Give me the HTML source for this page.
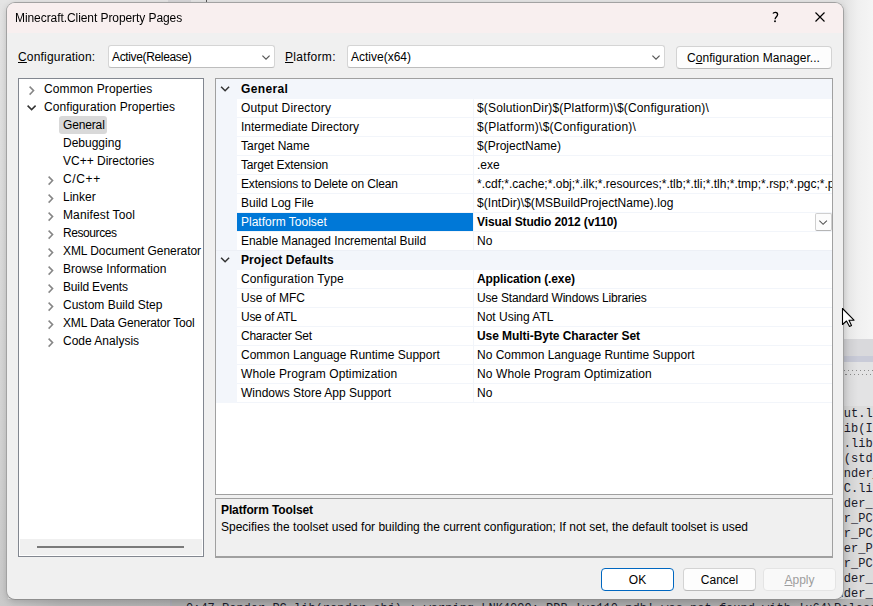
<!DOCTYPE html>
<html><head><meta charset="utf-8">
<style>
*{margin:0;padding:0;box-sizing:border-box}
html,body{width:873px;height:606px;overflow:hidden}
body{position:relative;background:#e6e6e6;font-family:"Liberation Sans",sans-serif;font-size:12px;color:#000}
.a{position:absolute}
.t{position:absolute;white-space:nowrap;line-height:18px;height:18px}
.b{font-weight:bold;letter-spacing:-0.12px}
.u{text-decoration:underline;text-underline-offset:1px;text-decoration-thickness:1px}
#bgl{left:0;top:0;width:8px;height:606px;background:linear-gradient(to bottom,#e3e3e3 0,#dadada 250px,#d2d2d2 450px,#c9c9c9 606px)}
#bgtop{left:0;top:0;width:842px;height:3px;background:#e4e4e4}
#bgr{left:836px;top:0;width:37px;height:340px;background:linear-gradient(to right,#e2e2e2 8px,#f0f0f0 22px,#f5f5f5)}
#code{left:780px;top:339px;width:93px;height:267px;background:#d7d7d9;overflow:hidden}
#bgbot{left:0;top:599px;width:873px;height:7px;background:linear-gradient(to right,#cacaca,#b6b6b6 60px,#b0b0b0 170px,#aaaaab 172px,#aaaaab 780px,#b8b8b8 873px);overflow:hidden}
#dlg{left:6px;top:2px;width:838px;height:598px;border:1px solid #a2a2a2;border-bottom-color:#8e8e8e;box-shadow:0 2px 6px rgba(0,0,0,0.16);border-radius:9px;background:#f0f0f0;overflow:hidden}
#title{left:0;top:0;width:836px;height:30px;background:#f8efef}
.combo{position:absolute;background:#fff;border:1px solid #d5d5d5;border-bottom-color:#bdbdbd;border-radius:3px;height:23px}
.btn{position:absolute;background:#fdfdfd;border:1px solid #d3d3d3;border-bottom-color:#b9b9b9;border-radius:4px}
.btn .t{width:100%;text-align:center}
#tree{left:11px;top:75px;width:186px;height:479px;border:1px solid #828790;background:#fff;overflow:hidden}
.tsel{width:48px;height:18px;background:#d9d9d9;border-radius:3px}
#hsb{left:1px;top:460px;width:182px;height:16px;background:#f0f0f0}
#hth{left:17px;top:7px;width:147px;height:2px;background:#7a7a7a}
#grid{left:208px;top:75px;width:618px;height:417px;border:1px solid #a0a0a0;background:#fff;overflow:hidden}
#desc{left:208px;top:495px;width:618px;height:60px;border:1px solid #a0a0a0;border-bottom-width:2px;background:#f0f0f0}
.row{position:absolute;left:0;width:616px;height:19px}
.cat{background:#f3f6fb}
.gut{position:absolute;left:0;top:0;width:21px;height:19px;background:#f3f6fb}
.nm{position:absolute;left:21px;top:0;width:236px;height:18px;padding-left:4px;line-height:18px;white-space:nowrap;overflow:hidden}
.nm.sel{background:#0078d7;color:#fff}
.vl{position:absolute;left:258px;top:0;width:358px;height:18px;padding-left:3px;line-height:18px;white-space:nowrap;overflow:hidden}
.sep{position:absolute;left:21px;top:18px;width:595px;height:1px;background:#f2f5fa}
.vsep{position:absolute;left:257px;top:0;width:1px;height:19px;background:#f2f5fa}
.dd{position:absolute;left:599px;top:0;width:17px;height:18px;background:#fcfcfc;border:1px solid #cfcfcf;border-bottom-color:#b5b5b5;border-radius:2px}
#codetxt{left:56.6px;top:68px;font-family:"Liberation Mono",monospace;font-size:12px;line-height:15px;color:#1a1a2a}
#bottxt{left:186px;top:3px;font-family:"Liberation Mono",monospace;font-size:12px;line-height:15px;color:#1a1a2a}

</style></head><body>
<div class="a" id="bgl"></div>
<div class="a" id="bgtop"></div>
<div class="a" style="left:168px;top:0;width:23px;height:3px;background:#d6d6d8"></div>
<div class="a" style="left:206px;top:0;width:1px;height:3px;background:#555"></div>
<div class="a" id="bgr"></div>
<div class="a" id="code">
<div class="a" style="left:0;top:0;width:93px;height:17px;background:#d9d9dc"></div>
<div class="a" style="left:0;top:17px;width:93px;height:6px;background:#c9cbd8"></div>
<div class="a" style="left:0;top:23px;width:93px;height:44px;background:#e3e3e4"></div>
<div class="a" style="left:64px;top:31px;width:29px;height:1px;background:repeating-linear-gradient(to right,#8a8a8a 0,#8a8a8a 1px,transparent 1px,transparent 4px);background-position:0 0"></div>
<div class="a" style="left:64px;top:35px;width:29px;height:1px;background:repeating-linear-gradient(to right,#8a8a8a 0,#8a8a8a 1px,transparent 1px,transparent 4px);background-position:2px 0"></div>
<div class="a" style="left:0;top:67px;width:93px;height:200px;background:#dcdcdc"></div>
<pre class="a" id="codetxt">put.l
lib(I
t.lib
 (std
ender_
PC.li
nder_
er_PC
er_PC
der_P
er_PC
nder_
nder_</pre>
<div class="a" style="left:64px;top:0;width:14px;height:267px;background:linear-gradient(to right,rgba(0,0,0,0.08),rgba(0,0,0,0))"></div>
</div>
<div class="a" id="bgbot">
<div class="a" style="left:170px;top:0;width:2px;height:10px;background:#a9a9b2"></div>
<pre class="a" id="bottxt">0:47 Render_PC.lib(render.obj) : warning LNK4099: PDB 'vc110.pdb' was not found with 'x64\Release\Render_PC.lib'</pre>
</div>
<svg class="a" style="left:840px;top:306px;z-index:10" width="18" height="24" viewBox="0 0 18 24"><path d="M2.5 2.5L2.5 18.5L6.5 15L9.5 20.5L11.5 19.5L9 14.2L14 14.2Z" fill="#fff" stroke="#000" stroke-width="1.1" stroke-linejoin="round"/></svg>
<div class="a" id="dlg">
<div class="a" id="title"></div>
<div class="t" style="left:8px;top:6px;letter-spacing:-0.073px;will-change:transform">Minecraft.Client Property Pages</div>
<svg class="a" style="left:761px;top:6px" width="16" height="16" viewBox="0 0 16 16"><path d="M5 4.6C5.6 3.2 9.6 2.6 9.6 5.6C9.6 7.6 7.2 8 7.1 10.3" fill="none" stroke="#000" stroke-width="1.35"/><circle cx="7" cy="12.3" r="0.95" fill="#000"/></svg>
<svg class="a" style="left:807px;top:8px" width="12" height="12" viewBox="0 0 12 12"><path d="M1.5 1.5L10.5 10.5M10.5 1.5L1.5 10.5" stroke="#000" stroke-width="1.15"/></svg>
<div class="t" style="left:11px;top:45px;letter-spacing:0.19px"><span class="u">C</span>onfiguration:</div>
<div class="combo" style="left:101px;top:42px;width:167px"><div class="t" style="left:3px;top:2px;letter-spacing:-0.35px">Active(Release)</div>
<svg class="a" style="left:153px;top:9px" width="10" height="6" viewBox="0 0 10 6"><path d="M0.4 0.6L4 4.1L7.6 0.6" fill="none" stroke="#555" stroke-width="1.2"/></svg></div>
<div class="t" style="left:278px;top:45px;letter-spacing:0.31px"><span class="u">P</span>latform:</div>
<div class="combo" style="left:340px;top:42px;width:318px"><div class="t" style="left:3px;top:2px">Active(x64)</div>
<svg class="a" style="left:304px;top:9px" width="10" height="6" viewBox="0 0 10 6"><path d="M0.4 0.6L4 4.1L7.6 0.6" fill="none" stroke="#555" stroke-width="1.2"/></svg></div>
<div class="btn" style="left:669px;top:43px;width:156px;height:23px"><div class="t" style="left:10px;top:2px;width:auto;letter-spacing:0.065px">C<span class="u">o</span>nfiguration Manager...</div></div>
<div class="a" id="tree">
<svg class="a" style="left:10px;top:7px" width="7" height="10" viewBox="0 0 7 10"><path d="M0.6 0.6L4.6 4.6L0.6 8.6" fill="none" stroke="#868686" stroke-width="1.5"/></svg>
<div class="t" style="left:25px;top:1px;letter-spacing:0.100px;">Common Properties</div>
<svg class="a" style="left:8px;top:26px" width="10" height="7" viewBox="0 0 10 7"><path d="M0.6 0.6L4.6 4.6L8.6 0.6" fill="none" stroke="#333" stroke-width="1.5"/></svg>
<div class="t" style="left:25px;top:19px;letter-spacing:0.070px;">Configuration Properties</div>
<div class="a tsel" style="left:40px;top:37px"></div>
<div class="t" style="left:44px;top:37px;letter-spacing:-0.150px;">General</div>
<div class="t" style="left:44px;top:55px;">Debugging</div>
<div class="t" style="left:44px;top:73px;">VC++ Directories</div>
<svg class="a" style="left:29px;top:97px" width="7" height="10" viewBox="0 0 7 10"><path d="M0.6 0.6L4.6 4.6L0.6 8.6" fill="none" stroke="#868686" stroke-width="1.5"/></svg>
<div class="t" style="left:44px;top:91px;letter-spacing:0.625px;">C/C++</div>
<svg class="a" style="left:29px;top:115px" width="7" height="10" viewBox="0 0 7 10"><path d="M0.6 0.6L4.6 4.6L0.6 8.6" fill="none" stroke="#868686" stroke-width="1.5"/></svg>
<div class="t" style="left:44px;top:109px;">Linker</div>
<svg class="a" style="left:29px;top:133px" width="7" height="10" viewBox="0 0 7 10"><path d="M0.6 0.6L4.6 4.6L0.6 8.6" fill="none" stroke="#868686" stroke-width="1.5"/></svg>
<div class="t" style="left:44px;top:127px;letter-spacing:0.125px;">Manifest Tool</div>
<svg class="a" style="left:29px;top:151px" width="7" height="10" viewBox="0 0 7 10"><path d="M0.6 0.6L4.6 4.6L0.6 8.6" fill="none" stroke="#868686" stroke-width="1.5"/></svg>
<div class="t" style="left:44px;top:145px;letter-spacing:-0.425px;">Resources</div>
<svg class="a" style="left:29px;top:169px" width="7" height="10" viewBox="0 0 7 10"><path d="M0.6 0.6L4.6 4.6L0.6 8.6" fill="none" stroke="#868686" stroke-width="1.5"/></svg>
<div class="t" style="left:44px;top:163px;letter-spacing:-0.076px;">XML Document Generator</div>
<svg class="a" style="left:29px;top:187px" width="7" height="10" viewBox="0 0 7 10"><path d="M0.6 0.6L4.6 4.6L0.6 8.6" fill="none" stroke="#868686" stroke-width="1.5"/></svg>
<div class="t" style="left:44px;top:181px;">Browse Information</div>
<svg class="a" style="left:29px;top:205px" width="7" height="10" viewBox="0 0 7 10"><path d="M0.6 0.6L4.6 4.6L0.6 8.6" fill="none" stroke="#868686" stroke-width="1.5"/></svg>
<div class="t" style="left:44px;top:199px;letter-spacing:-0.155px;">Build Events</div>
<svg class="a" style="left:29px;top:223px" width="7" height="10" viewBox="0 0 7 10"><path d="M0.6 0.6L4.6 4.6L0.6 8.6" fill="none" stroke="#868686" stroke-width="1.5"/></svg>
<div class="t" style="left:44px;top:217px;">Custom Build Step</div>
<svg class="a" style="left:29px;top:241px" width="7" height="10" viewBox="0 0 7 10"><path d="M0.6 0.6L4.6 4.6L0.6 8.6" fill="none" stroke="#868686" stroke-width="1.5"/></svg>
<div class="t" style="left:44px;top:235px;letter-spacing:-0.168px;">XML Data Generator Tool</div>
<svg class="a" style="left:29px;top:259px" width="7" height="10" viewBox="0 0 7 10"><path d="M0.6 0.6L4.6 4.6L0.6 8.6" fill="none" stroke="#868686" stroke-width="1.5"/></svg>
<div class="t" style="left:44px;top:253px;">Code Analysis</div>
<div class="a" id="hsb"><div class="a" id="hth"></div></div>
</div>
<div class="a" id="grid"><div class="a" style="left:0;top:0;width:616px;height:1px;background:#f3f6fb"></div>
<div class="row cat" style="top:1px"><svg class="a" style="left:4px;top:6px" width="11" height="7" viewBox="0 0 11 7"><path d="M1.1 0.8L5.1 4.8L9.1 0.8" fill="none" stroke="#333" stroke-width="1.5"/></svg><div class="t b" style="left:25px;top:0;letter-spacing:0.347px;">General</div></div>
<div class="row" style="top:20px"><div class="gut"></div><div class="nm" style="letter-spacing:0.173px;">Output Directory</div><div class="vsep"></div><div class="vl" style="letter-spacing:0.152px;">$(SolutionDir)$(Platform)\$(Configuration)\</div><div class="sep"></div></div>
<div class="row" style="top:39px"><div class="gut"></div><div class="nm" style="">Intermediate Directory</div><div class="vsep"></div><div class="vl" style="letter-spacing:0.246px;">$(Platform)\$(Configuration)\</div><div class="sep"></div></div>
<div class="row" style="top:58px"><div class="gut"></div><div class="nm" style="">Target Name</div><div class="vsep"></div><div class="vl" style="">$(ProjectName)</div><div class="sep"></div></div>
<div class="row" style="top:77px"><div class="gut"></div><div class="nm" style="letter-spacing:-0.153px;">Target Extension</div><div class="vsep"></div><div class="vl" style="">.exe</div><div class="sep"></div></div>
<div class="row" style="top:96px"><div class="gut"></div><div class="nm" style="letter-spacing:-0.164px;">Extensions to Delete on Clean</div><div class="vsep"></div><div class="vl" style="">*.cdf;*.cache;*.obj;*.ilk;*.resources;*.tlb;*.tli;*.tlh;*.tmp;*.rsp;*.pgc;*.pgd;*.meta;*.tlog;*.manifest;*.res;*.pch;*.exp;*.idb;*.rep;*.xdc;*.pdb;*_manifest.rc;*.bsc;*.sbr;*.xml;*.metagen;*.bi</div><div class="sep"></div></div>
<div class="row" style="top:115px"><div class="gut"></div><div class="nm" style="">Build Log File</div><div class="vsep"></div><div class="vl" style="letter-spacing:0.047px;">$(IntDir)\$(MSBuildProjectName).log</div><div class="sep"></div></div>
<div class="row" style="top:134px"><div class="gut"></div><div class="nm sel" style="">Platform Toolset</div><div class="vsep"></div><div class="vl b" style="">Visual Studio 2012 (v110)</div><div class="sep"></div><div class="dd"><svg class="a" style="left:3px;top:6px" width="10" height="6" viewBox="0 0 10 6"><path d="M0.3 0.6L4.1 4.3L7.9 0.6" fill="none" stroke="#555" stroke-width="1.15"/></svg></div></div>
<div class="row" style="top:153px"><div class="gut"></div><div class="nm" style="letter-spacing:-0.055px;">Enable Managed Incremental Build</div><div class="vsep"></div><div class="vl" style="">No</div><div class="sep" style="left:0;width:616px;background:#edf0f6"></div></div>
<div class="row cat" style="top:172px"><svg class="a" style="left:4px;top:6px" width="11" height="7" viewBox="0 0 11 7"><path d="M1.1 0.8L5.1 4.8L9.1 0.8" fill="none" stroke="#333" stroke-width="1.5"/></svg><div class="t b" style="left:25px;top:0;letter-spacing:0.087px;">Project Defaults</div></div>
<div class="row" style="top:191px"><div class="gut"></div><div class="nm" style="letter-spacing:0.124px;">Configuration Type</div><div class="vsep"></div><div class="vl b" style="">Application (.exe)</div><div class="sep"></div></div>
<div class="row" style="top:210px"><div class="gut"></div><div class="nm" style="">Use of MFC</div><div class="vsep"></div><div class="vl" style="letter-spacing:-0.172px;">Use Standard Windows Libraries</div><div class="sep"></div></div>
<div class="row" style="top:229px"><div class="gut"></div><div class="nm" style="letter-spacing:-0.278px;">Use of ATL</div><div class="vsep"></div><div class="vl" style="">Not Using ATL</div><div class="sep"></div></div>
<div class="row" style="top:248px"><div class="gut"></div><div class="nm" style="letter-spacing:-0.250px;">Character Set</div><div class="vsep"></div><div class="vl b" style="letter-spacing:-0.064px;">Use Multi-Byte Character Set</div><div class="sep"></div></div>
<div class="row" style="top:267px"><div class="gut"></div><div class="nm" style="">Common Language Runtime Support</div><div class="vsep"></div><div class="vl" style="">No Common Language Runtime Support</div><div class="sep"></div></div>
<div class="row" style="top:286px"><div class="gut"></div><div class="nm" style="letter-spacing:0.108px;">Whole Program Optimization</div><div class="vsep"></div><div class="vl" style="letter-spacing:0.096px;">No Whole Program Optimization</div><div class="sep"></div></div>
<div class="row" style="top:305px"><div class="gut"></div><div class="nm" style="">Windows Store App Support</div><div class="vsep"></div><div class="vl" style="">No</div><div class="sep"></div></div>
</div>
<div class="a" id="desc">
<div class="t b" style="left:5px;top:2px">Platform Toolset</div>
<div class="t" style="left:5px;top:19px">Specifies the toolset used for building the current configuration; If not set, the default toolset is used</div>
</div>
<div class="btn" style="left:594px;top:565px;width:73px;height:23px;border:1px solid #0067c0;background:#fff"><div class="t" style="top:2px">OK</div></div>
<div class="btn" style="left:676px;top:565px;width:73px;height:23px"><div class="t" style="top:2px">Cancel</div></div>
<div class="btn" style="left:756px;top:565px;width:73px;height:23px;background:#f9f9f9;border-color:#e4e4e4;color:#9d9d9d"><div class="t" style="top:2px;left:0px"><span class="u">A</span>pply</div></div>
</div>
</body></html>
